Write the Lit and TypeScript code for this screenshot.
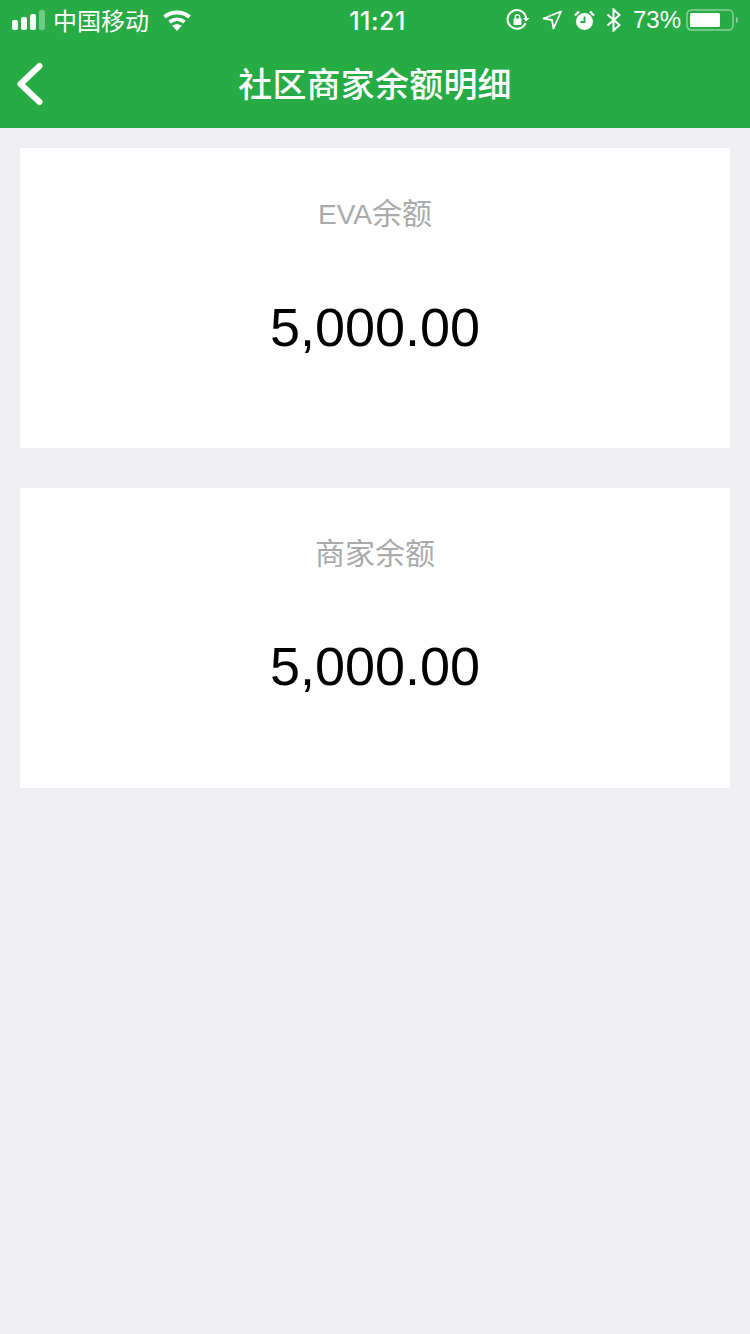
import {LitElement, html, css} from 'lit';
import {customElement} from 'lit/decorators.js';

@customElement('status-bar')
export class StatusBar extends LitElement {
  static styles = css`
    :host {
      display: grid;
      grid-template-columns: 1fr auto 1fr;
      align-items: center;
      height: 40px;
      padding: 0 12px;
      color: #fff;
      font-size: 24px;
      font-family: "Liberation Sans", "Noto Sans CJK SC", sans-serif;
    }

    .left,
    .right {
      display: flex;
      align-items: center;
    }

    .right {
      justify-content: flex-end;
      margin-right: -1px;
    }

    .bars {
      display: flex;
      align-items: flex-end;
      gap: 3px;
      height: 20px;
      margin-right: 8px;
    }

    .bars i {
      display: block;
      width: 6px;
      border-radius: 2px;
      background: #fff;
    }

    .bars i:nth-child(1) {
      height: 10px;
    }

    .bars i:nth-child(2) {
      height: 13px;
    }

    .bars i:nth-child(3) {
      height: 16px;
    }

    .bars i:nth-child(4) {
      height: 20px;
      background: rgba(255, 255, 255, 0.35);
    }

    .carrier {
      margin-top: -2px;
    }

    .wifi {
      margin-left: 14px;
    }

    .time {
      padding-left: 5px;
      font-family: Inter, sans-serif;
      font-weight: 500;
      font-size: 25px;
      letter-spacing: 0.5px;
      margin-top: 1px;
    }

    .lock {
      margin-right: 12px;
    }

    .arrow {
      margin-right: 12px;
    }

    .alarm {
      margin-right: 11px;
    }

    .percent {
      margin: 0 5px 0 12px;
    }

    svg {
      display: block;
    }
  `;

  render() {
    return html`
      <div class="left">
        <div class="bars"><i></i><i></i><i></i><i></i></div>
        <span class="carrier">中国移动</span>
        <svg class="wifi" width="28" height="22" viewBox="0 0 28 22" fill="none" stroke="#fff" stroke-width="3.800">
          <path d="M1.500 8c7-6 18-6 25 0" />
          <path d="M6.500 13c4.500-3.600 10.500-3.600 15 0" />
          <path d="M14 22l-4.800-5.200c2.800-2 6.800-2 9.600 0z" fill="#fff" stroke="none" />
        </svg>
      </div>
      <div class="time">11:21</div>
      <div class="right">
        <svg class="lock" width="24" height="24" viewBox="0 0 24 24" fill="none" stroke="#fff" stroke-width="2">
          <path d="M19.500 15a9.300 9.300 0 1 1 .6-5" />
          <path d="M17 10h6.500l-3.200 3.600z" fill="#fff" stroke="none" />
          <rect x="7.500" y="10.500" width="8" height="6.500" rx="1" fill="#fff" stroke="none" />
          <path d="M9.300 10.500V9a2.200 2.200 0 0 1 4.400 0v1.500" stroke-width="1.500" />
        </svg>
        <svg class="arrow" width="20" height="20" viewBox="0 0 20 20" fill="none" stroke="#fff" stroke-width="1.800" stroke-linejoin="round">
          <path d="M19 1.500L1.500 8.500l8.500 1.500 1.500 8.500z" />
        </svg>
        <svg class="alarm" width="21" height="21" viewBox="0 0 21 21">
          <circle cx="10.500" cy="11.500" r="8.500" fill="#fff" />
          <path d="M10.500 6.500v5.500H6.500" fill="none" stroke="#27ab45" stroke-width="1.800" />
          <path d="M1 5.500L5 1.500M20 5.500L16 1.500" stroke="#fff" stroke-width="2.400" />
        </svg>
        <svg width="15" height="24" viewBox="0 0 15 24" fill="none" stroke="#fff" stroke-width="2">
          <path d="M1.500 6.500l12 10.500-6 5.500V1.500l6 5.500-12 10.500" />
        </svg>
        <span class="percent">73%</span>
        <svg width="53" height="22" viewBox="0 0 53 22">
          <rect x="1" y="1" width="46" height="20" rx="4.500" fill="none" stroke="rgba(255,255,255,.45)" stroke-width="1.500" />
          <rect x="4" y="4" width="30" height="14" rx="1.500" fill="#fff" />
          <path d="M50 8c1.500 .4 2 1.500 2 3s-.5 2.600-2 3z" fill="rgba(255,255,255,.45)" />
        </svg>
      </div>
    `;
  }
}

@customElement('app-root')
export class AppRoot extends LitElement {
  static styles = css`
    :host {
      display: block;
      min-height: 1334px;
      background: #efeff4;
      font-family: "Liberation Sans", "Noto Sans CJK SC", sans-serif;
    }

    .header {
      background: #27ab45;
    }

    .nav {
      display: grid;
      grid-template-columns: 1fr auto 1fr;
      align-items: center;
      height: 88px;
      padding: 0 16px;
      color: #fff;
    }

    .nav svg {
      display: block;
    }

    .title {
      margin-top: -4px;
      font-size: 34px;
      font-weight: 500;
      letter-spacing: 0.2px;
    }

    .list {
      display: flex;
      flex-direction: column;
      gap: 40px;
      padding: 20px;
    }

    .card {
      display: flex;
      flex-direction: column;
      align-items: center;
      height: 300px;
      padding-top: 46px;
      box-sizing: border-box;
      background: #fff;
    }

    .label {
      font-size: 30px;
      line-height: 40px;
      color: #aaa;
    }

    .latin {
      font-size: 28px;
    }

    .amount {
      margin-top: 61px;
      font-size: 54px;
      line-height: 62px;
      color: #000;
    }
  `;

  render() {
    return html`
      <div class="header">
        <status-bar></status-bar>
        <div class="nav">
          <svg width="28" height="44" viewBox="0 0 28 44" fill="none" stroke="#fff" stroke-width="6" stroke-linecap="round" stroke-linejoin="round">
            <path d="M23.500 4L4.500 22l19 18" />
          </svg>
          <div class="title">社区商家余额明细</div>
        </div>
      </div>
      <div class="list">
        <div class="card">
          <div class="label"><span class="latin">EVA</span>余额</div>
          <div class="amount">5,000.00</div>
        </div>
        <div class="card">
          <div class="label">商家余额</div>
          <div class="amount">5,000.00</div>
        </div>
      </div>
    `;
  }
}
